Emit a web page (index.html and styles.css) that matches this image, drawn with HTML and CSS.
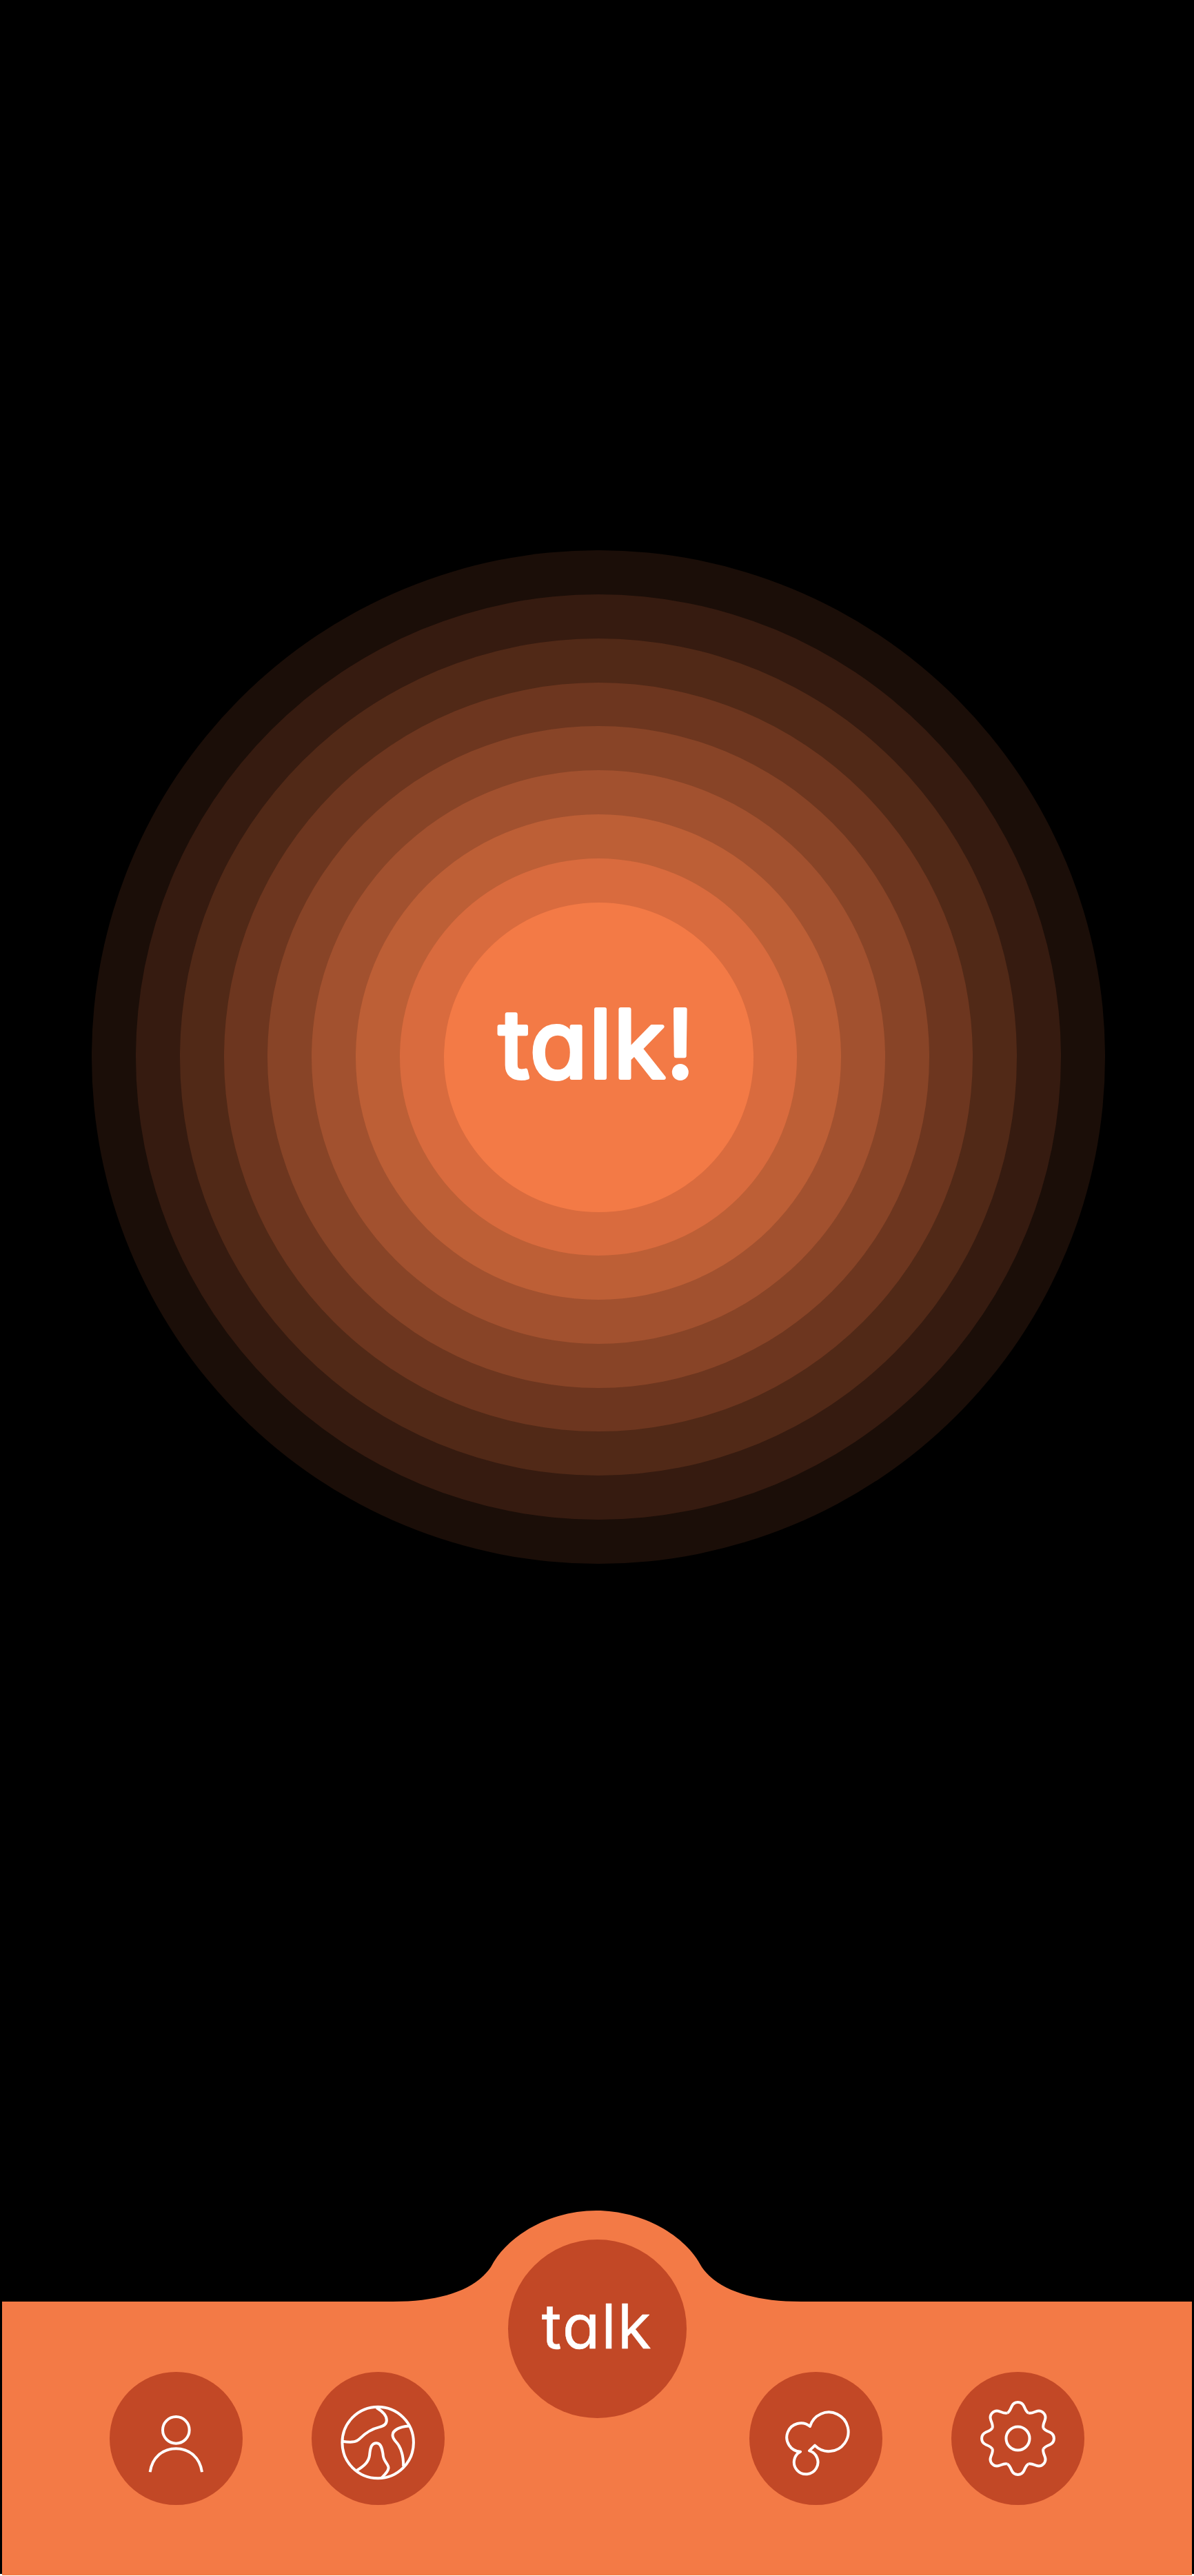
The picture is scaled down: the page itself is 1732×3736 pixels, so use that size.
FILE: index.html
```html
<!DOCTYPE html>
<html lang="en">
<head>
<meta charset="utf-8">
<title>talk</title>
<link rel="stylesheet" href="styles.css">
</head>
<body>
<div class="screen">
<main class="stage">
  <button class="ring ring-8"><span class="ring ring-7"><span class="ring ring-6"><span class="ring ring-5"><span class="ring ring-4"><span class="ring ring-3"><span class="ring ring-2"><span class="ring ring-1"><span class="core">
    <svg class="word word-big" viewBox="0 0 320 160"><text x="158" y="110">talk!</text></svg>
  </span></span></span></span></span></span></span></span></button>
</main>
<nav class="tabbar">
  <svg class="hump" viewBox="0 0 592 134" preserveAspectRatio="none"><path d="M0 134 V132 C72 132 120 114 142 82 C165 36 228 0 295 0 C362 0 425 36 448 82 C470 114 520 132 592 132 V134 Z"/></svg>
  <div class="tab-group">
    <a class="tab"><svg class="icon" viewBox="27 60 579 579"><circle cx="316" cy="313" r="58"/><path d="M203 496 C212 432 258 394 316 394 S420 432 429 496"/></svg></a>
    <a class="tab"><svg class="icon" viewBox="36 60 578 578"><circle cx="324" cy="367" r="155"/><path d="M318 216 C345 232 362 250 362 270 C362 288 350 296 330 300 C295 308 270 325 245 350 C228 368 200 366 170 362"/><path d="M458 295 C420 298 388 312 388 335 C388 355 405 362 415 380 C430 405 435 435 435 470"/><path d="M232 488 C262 470 285 452 288 420 C291 385 298 369 318 369 C338 369 344 395 347 425 C350 450 372 462 370 478 C368 495 352 508 340 520"/></svg></a>
  </div>
  <a class="talk-button"><svg class="word word-small" viewBox="0 0 200 120"><text x="100" y="88">talk</text></svg></a>
  <div class="tab-group">
    <a class="tab"><svg class="icon" viewBox="21 60 579 579"><path d="M285 297 A85 85 0 1 1 306 380 L282 403 A52 52 0 1 1 243 407 A62 62 0 1 1 285 297 Z"/></svg></a>
    <a class="tab"><svg class="icon" viewBox="29 60 578 578"><circle cx="318" cy="349" r="51"/><g transform="translate(318 349)"><path id="lobe" d="M-45.9 -110.9 C-36.7 -114.7 -33 -125 -27 -139 C-21 -152 -12 -157 0 -157 C12 -157 21 -152 27 -139 C33 -125 36.7 -114.7 45.9 -110.9"/><use href="#lobe" transform="rotate(45)"/><use href="#lobe" transform="rotate(90)"/><use href="#lobe" transform="rotate(135)"/><use href="#lobe" transform="rotate(180)"/><use href="#lobe" transform="rotate(225)"/><use href="#lobe" transform="rotate(270)"/><use href="#lobe" transform="rotate(315)"/></g></svg></a>
  </div>
</nav>
</div>
</body>
</html>
```

FILE: styles.css
```css
* { box-sizing: border-box; }
html, body { margin: 0; padding: 0; }
body {
  width: 1732px;
  height: 3736px;
  background: #fff;
  overflow: hidden;
  font-family: Inter, "Liberation Sans", sans-serif;
}
.screen {
  height: 3733px;
  background: #000;
}
.stage {
  height: 3066px;
  padding-left: 4px;
  display: flex;
  align-items: center;
  justify-content: center;
}
.ring, .core {
  display: flex;
  align-items: center;
  justify-content: center;
  border-radius: 50%;
  border: 0;
  margin: 0;
}
.ring { padding: 63.8px; }
.ring-8 { background: #1b0e08; }
.ring-7 { background: #361b10; }
.ring-6 { background: #512917; }
.ring-5 { background: #6d361f; }
.ring-4 { background: #884427; }
.ring-3 { background: #a2512f; }
.ring-2 { background: #bd5f36; }
.ring-1 { background: #d96b3e; }
.core {
  width: 449px;
  height: 449px;
  background: #f37a46;
}
.word { display: block; overflow: visible; }
.word text {
  font-family: Inter, "Liberation Sans", sans-serif;
  font-feature-settings: "cv11" 1;
  text-anchor: middle;
  fill: #fff;
  stroke: #fff;
  stroke-linejoin: round;
}
.word-big { width: 320px; height: 160px; }
.word-big text { font-size: 136px; font-weight: 400; stroke-width: 6px; letter-spacing: 2.5px; }
.word-small { width: 200px; height: 120px; }
.word-small text { font-size: 89px; font-weight: 400; stroke-width: 0.5px; letter-spacing: 2px; }
.tabbar {
  position: relative;
  height: 396.5px;
  margin: 272px 3px 0;
  padding: 102px 156px 0;
  background: #f37a46;
  display: flex;
  justify-content: space-between;
  align-items: flex-start;
}
.hump {
  position: absolute;
  left: 567px;
  top: -132px;
  width: 592px;
  height: 134px;
  fill: #f37a46;
}
.tab-group { display: flex; gap: 100px; }
.tab, .talk-button {
  display: flex;
  align-items: center;
  justify-content: center;
  border-radius: 50%;
  background: #c24826;
}
.tab { width: 193px; height: 193px; }
.talk-button {
  position: relative;
  width: 259px;
  height: 259px;
  margin-top: -192px;
}
.icon {
  display: block;
  width: 193px;
  height: 193px;
  fill: none;
  stroke: #fff;
  stroke-width: 12;
  stroke-linejoin: round;
}
```
